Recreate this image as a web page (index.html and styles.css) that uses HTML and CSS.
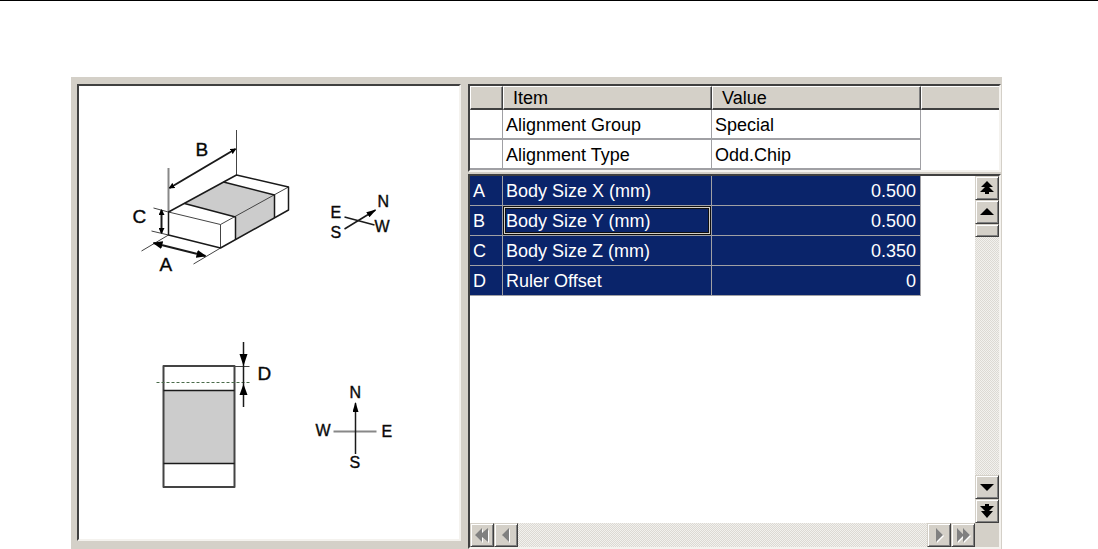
FILE: index.html
```
<!DOCTYPE html>
<html lang="en">
<head>
  <meta charset="UTF-8">
  <meta name="viewport" content="width=device-width, initial-scale=1.0">
  <title>Alignment Data</title>
  <link rel="stylesheet" href="styles.css">
</head>
<body>
<main class="window">
  <!-- Part drawing -->
  <section class="panel drawing">
    <svg class="diagram" viewBox="79 86 379 453" role="img" aria-label="Chip dimensions">
      <defs>
        <marker id="arrow" viewBox="0 0 10 8" refX="9" refY="4" markerWidth="10" markerHeight="8" markerUnits="userSpaceOnUse" orient="auto-start-reverse">
          <path d="M0 0 L10 4 L0 8 Z"/>
        </marker>
        <marker id="arrow-thin" viewBox="0 0 10 6" refX="9" refY="3" markerWidth="10" markerHeight="6" markerUnits="userSpaceOnUse" orient="auto-start-reverse">
          <path d="M0 0 L10 3 L0 6 Z"/>
        </marker>
        <marker id="arrow-small" viewBox="0 0 6 6" refX="5" refY="3" markerWidth="6" markerHeight="6" markerUnits="userSpaceOnUse" orient="auto-start-reverse">
          <path d="M0 0 L6 3 L0 6 Z"/>
        </marker>
      </defs>

      <!-- 3D view -->
      <path class="fill" d="M184 203.5 L223 182 L274 195 V218 L235 240 V217 Z"/>
      <path class="thin" d="M236 130 V175 M141 251 L168 235 M193 264 L220 248 M153 208 L168 212 M151 231 L168 235"/>
      <path class="pale" d="M168 168 V212"/>
      <path class="thin" d="M168 212 L220 224.5 L288 187 M220 224.5 V248"/>
      <path class="edge" d="M168 235 V212 L236 175 L288 187 V210 L220 248 Z"/>
      <path class="edge" d="M184 203.5 L235 217 V240 M223 182 L274 195 V218"/>
      <path class="dim" marker-start="url(#arrow-small)" marker-end="url(#arrow-small)" d="M169 188 L235 149"/>
      <path class="dim" marker-start="url(#arrow-small)" marker-end="url(#arrow-small)" d="M161 210 V233"/>
      <path class="dim" marker-start="url(#arrow)" marker-end="url(#arrow)" d="M153 243 L205 256"/>
      <text class="letter" x="195" y="156">B</text>
      <text class="letter" x="132" y="223">C</text>
      <text class="letter" x="159" y="271">A</text>

      <path class="axis" d="M344 217 L374 225"/>
      <path class="axis" marker-end="url(#arrow-thin)" d="M344 229 L375 210"/>
      <text class="compass" x="330" y="218">E</text>
      <text class="compass" x="377" y="207">N</text>
      <text class="compass" x="330" y="238">S</text>
      <text class="compass" x="374" y="232">W</text>

      <!-- Top view -->
      <rect class="fill" x="163" y="390" width="71" height="73"/>
      <rect class="outline" x="163" y="366" width="71" height="121"/>
      <path class="edge" d="M163 390.5 H234 M163 463.5 H234"/>
      <path class="dashed" d="M156 382.5 H249"/>
      <path class="thin" d="M234 366.5 H249"/>
      <path class="axis" d="M243 342 V407"/>
      <path d="M239 354 H247 L243 366 Z M239 395 H247 L243 384 Z"/>
      <text class="letter" x="257" y="380">D</text>

      <path class="pale" d="M333 431.5 H376"/>
      <path class="axis" marker-end="url(#arrow-thin)" d="M355 454 V403"/>
      <text class="compass" x="349" y="398">N</text>
      <text class="compass" x="315" y="436">W</text>
      <text class="compass" x="381" y="437">E</text>
      <text class="compass" x="349" y="468">S</text>
    </svg>
  </section>

  <section class="data">
    <!-- Alignment header grid -->
    <div class="panel group">
      <table class="grid">
        <colgroup><col class="col-key"><col class="col-item"><col class="col-value"><col></colgroup>
        <thead>
        <tr>
          <th></th>
          <th>Item</th>
          <th>Value</th>
          <th></th>
        </tr>
        </thead>
        <tbody>
        <tr>
          <td></td>
          <td>Alignment Group</td>
          <td>Special</td>
          <td class="blank"></td>
        </tr>
        <tr>
          <td></td>
          <td>Alignment Type</td>
          <td>Odd.Chip</td>
          <td class="blank"></td>
        </tr>
        </tbody>
      </table>
    </div>

    <!-- Body size grid -->
    <div class="panel sizes">
      <div class="view">
        <table class="grid selected">
          <colgroup><col class="col-key"><col class="col-item"><col class="col-value"><col></colgroup>
          <tbody>
          <tr>
            <td>A</td>
            <td>Body Size X (mm)</td>
            <td class="number">0.500</td>
            <td class="blank"></td>
          </tr>
          <tr>
            <td>B</td>
            <td class="current">Body Size Y (mm)</td>
            <td class="number">0.500</td>
            <td class="blank"></td>
          </tr>
          <tr>
            <td>C</td>
            <td>Body Size Z (mm)</td>
            <td class="number">0.350</td>
            <td class="blank"></td>
          </tr>
          <tr>
            <td>D</td>
            <td>Ruler Offset</td>
            <td class="number">0</td>
            <td class="blank"></td>
          </tr>
          </tbody>
        </table>
      </div>

      <div class="scroll vertical">
        <button type="button" aria-label="First row"><svg viewBox="0 0 16 16"><path d="M8 1 L14 7 H10 L15 12 H10 V14 H6 V12 H1 L6 7 H2 Z"/></svg></button>
        <button type="button" aria-label="Row up"><svg viewBox="0 0 16 16"><path d="M8 4 L15 11 H1 Z"/></svg></button>
        <button type="button" class="thumb" aria-label="Scroll position"></button>
        <span class="track"></span>
        <button type="button" aria-label="Row down"><svg viewBox="0 0 16 16"><path d="M1 5 H15 L8 12 Z"/></svg></button>
        <button type="button" aria-label="Last row"><svg viewBox="0 0 16 16"><path d="M1 3 H6 V1 H10 V3 H15 L10 8 H14 L8 15 L2 8 H6 Z"/></svg></button>
      </div>

      <div class="scroll horizontal">
        <button type="button" disabled aria-label="First column"><svg viewBox="0 0 16 16"><path class="light" d="M9 2 L2 9 L9 16 V11 L15 16 V3 L9 8 Z"/><path d="M8 1 L1 8 L8 15 V10 L14 15 V1 L8 6 Z"/></svg></button>
        <button type="button" disabled aria-label="Column left"><svg viewBox="0 0 16 16"><path class="light" d="M12 2 V16 L5 9 Z"/><path d="M11 1 V15 L4 8 Z"/></svg></button>
        <span class="track"></span>
        <button type="button" disabled aria-label="Column right"><svg viewBox="0 0 16 16"><path class="light" d="M6 2 V16 L13 9 Z"/><path d="M5 1 V15 L12 8 Z"/></svg></button>
        <button type="button" disabled aria-label="Last column"><svg viewBox="0 0 16 16"><path class="light" d="M3 2 L9 8 V2 L16 9 L9 16 V10 L3 16 Z"/><path d="M2 1 L8 7 V1 L15 8 L8 15 V9 L2 15 Z"/></svg></button>
      </div>
    </div>
  </section>
</main>
</body>
</html>
```
FILE: styles.css
```
:root {
  --face: #d4d0c8;
  --shadow: #808080;
  --dark: #404040;
  --line: #a0a0a4;
  --select: #0a246a;
}

* {
  box-sizing: border-box;
}

body {
  display: flex;
  flex-direction: column;
  height: 100vh;
  margin: 0;
  padding: 76px 96px 0 71px;
  border-top: 1px solid #000;
  background: #fff;
  color: #000;
  font-family: "Liberation Sans", Arial, sans-serif;
  font-size: 18px;
}

.window {
  flex: 1;
  display: grid;
  grid-template-columns: 384fr 533fr;
  gap: 7px;
  min-height: 0;
  padding: 7px 1px 0 6px;
  background: var(--face);
}

.panel {
  border: 2px solid;
  border-color: var(--dark) #f4f2ee #f4f2ee var(--dark);
  background: #fff;
}

.drawing {
  margin-bottom: 8px;
  min-height: 0;
}

.data {
  display: flex;
  flex-direction: column;
  gap: 2px;
  min-width: 0;
}

/* Diagram */
.diagram {
  display: block;
  width: 100%;
  height: 100%;
}

.diagram path,
.diagram rect {
  stroke-linejoin: round;
}

.fill {
  fill: #ccc;
}

.edge,
.outline,
.thin,
.pale,
.dim,
.axis,
.dashed {
  fill: none;
  stroke: #1a1a1a;
  stroke-width: 1.5;
}

.outline {
  stroke: #444;
  stroke-width: 2;
}

.thin {
  stroke: #444;
  stroke-width: 1;
}

.pale {
  stroke: #888;
  stroke-width: 2;
}

.dim {
  stroke-width: 2;
}

.dashed {
  stroke: #4a6a4a;
  stroke-width: 1;
  stroke-dasharray: 3 2;
}

.letter {
  font-size: 19px;
}

.compass {
  font-size: 16px;
}

.letter,
.compass {
  stroke: #222;
  stroke-width: 0.4;
}

/* Grids */
.grid {
  width: 100%;
  border-collapse: separate;
  border-spacing: 0;
  table-layout: fixed;
}

.col-key {
  width: 33px;
}

.col-item,
.col-value {
  width: 209px;
}

.grid th {
  height: 24px;
  padding: 0 9px;
  border: 1px solid;
  border-color: #fff var(--dark) var(--dark) #fff;
  border-bottom-width: 2px;
  background: var(--face);
  box-shadow: inset -1px 0 0 var(--shadow);
  font-weight: normal;
  text-align: left;
  line-height: 20px;
}

.grid th:last-child {
  border-right: 0;
  box-shadow: none;
}

.grid td {
  height: 30px;
  padding: 2px 3px 0;
  border-right: 1px solid var(--line);
  border-bottom: 2px solid var(--line);
  line-height: 20px;
  white-space: nowrap;
}

.selected td {
  padding-top: 0;
  border-bottom-width: 1px;
  background: var(--select);
  color: #fff;
}

.selected .number {
  padding-right: 4px;
  text-align: right;
}

.grid .blank {
  border: 0;
  background: #fff;
}

.selected .current {
  box-shadow: inset 0 0 0 1px #101010, inset 0 0 0 2px #d4d0c8, inset 0 0 0 3px #101010;
}

.sizes {
  flex: 1;
  display: grid;
  grid-template-columns: 1fr 24px;
  grid-template-rows: 1fr 24px;
  min-height: 0;
  background: var(--face);
}

.view {
  overflow: hidden;
  background: #fff;
}

/* Scroll bars */
.scroll {
  display: flex;
  min-width: 0;
  min-height: 0;
}

.vertical {
  flex-direction: column;
}

.track {
  flex: 1;
  background: repeating-conic-gradient(#f2f1ee 0 25%, #dcd9d3 0 50%) 0 0 / 2px 2px;
}

.scroll button {
  flex: none;
  display: grid;
  place-items: center;
  width: 24px;
  height: 24px;
  padding: 0;
  border: 1px solid;
  border-color: var(--face) var(--dark) var(--dark) var(--face);
  border-radius: 0;
  background: var(--face);
  box-shadow: inset 1px 1px 0 #fff, inset -1px -1px 0 var(--shadow);
}

.scroll .thumb {
  height: 13px;
}

.scroll svg {
  width: 16px;
  height: 16px;
  overflow: visible;
}

.scroll button:disabled path {
  fill: var(--shadow);
}

.scroll button:disabled .light {
  fill: #fff;
}
```
